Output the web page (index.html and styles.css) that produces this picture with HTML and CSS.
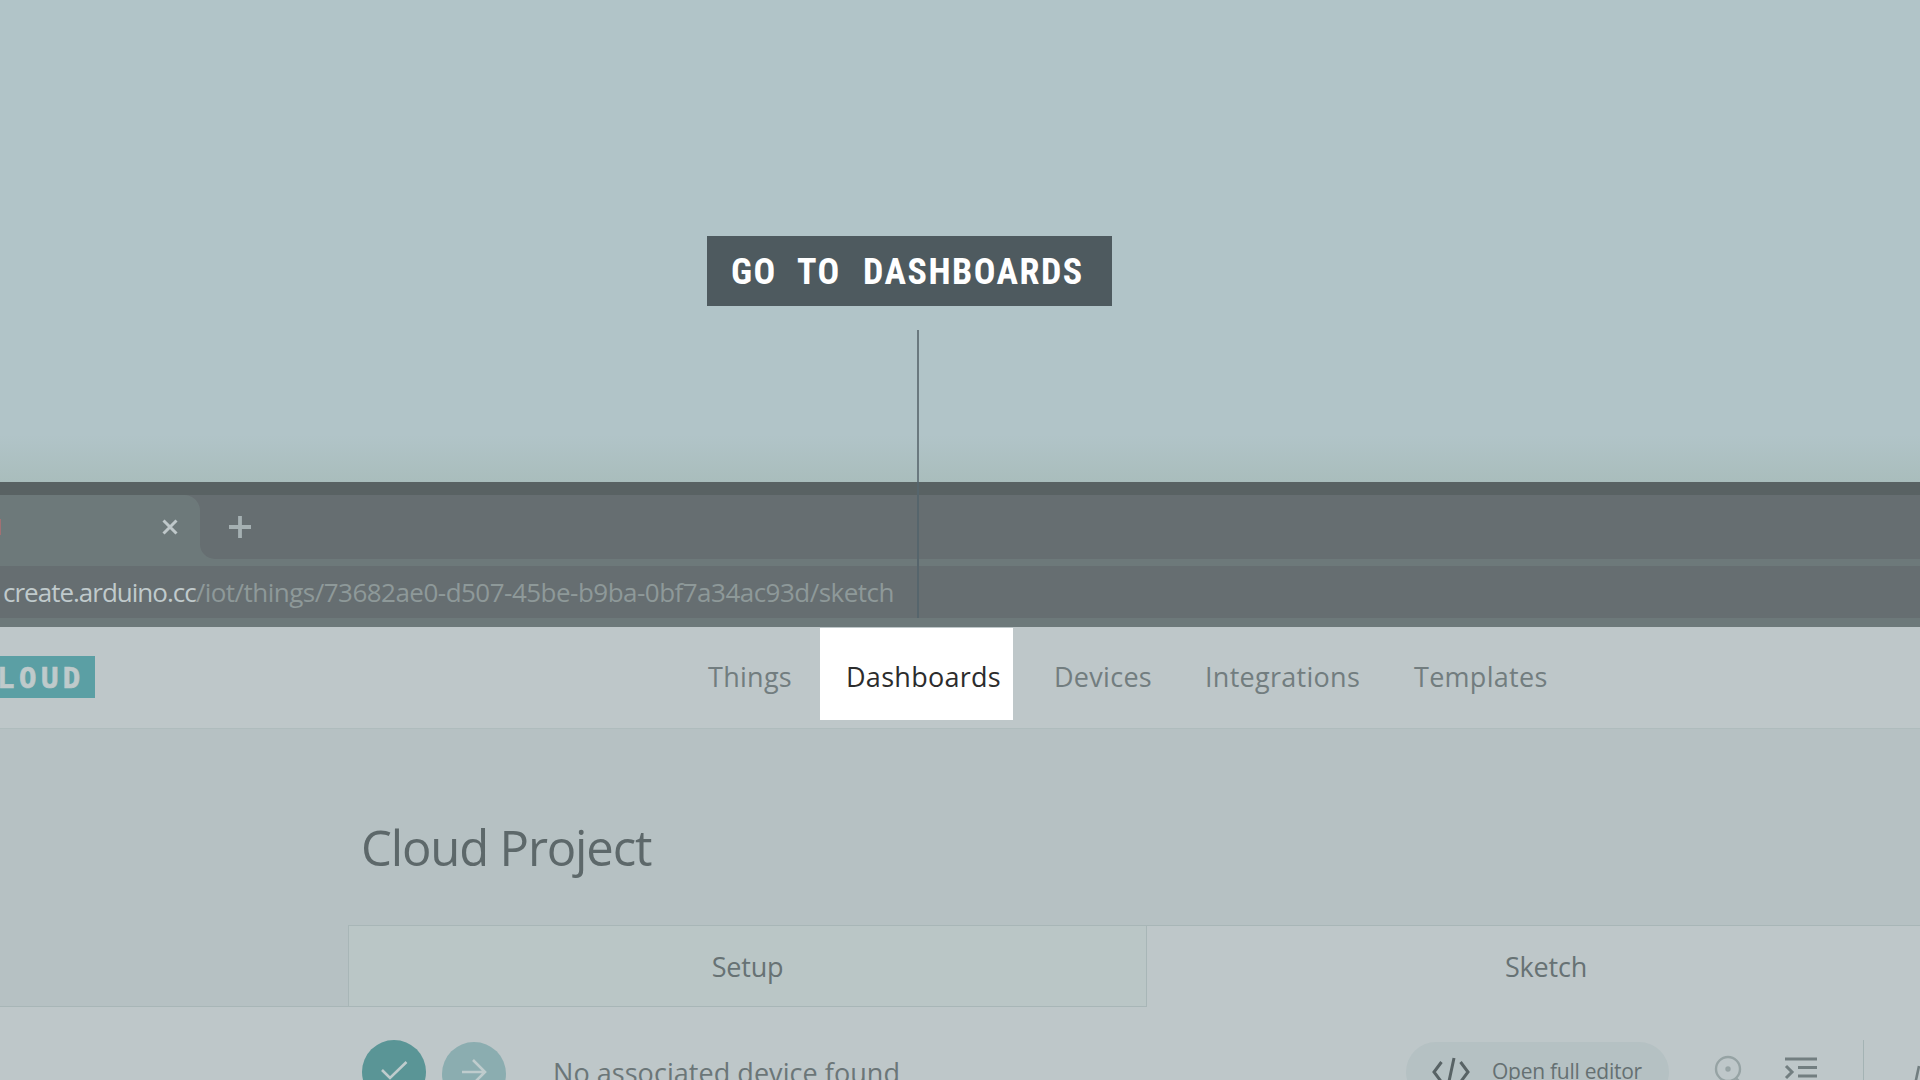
FILE: index.html
```html
<!DOCTYPE html>
<html lang="en">
<head>
<meta charset="utf-8">
<title>Arduino IoT Cloud</title>
<link rel="stylesheet" href="styles.css">
</head>
<body>
<main class="stage">
  <div class="backdrop"></div>
  <section class="browser">
    <div class="frame"></div>
    <div class="tabstrip">
      <div class="tab">
        <i class="favicon"></i>
        <svg class="close" width="16" height="16" viewBox="0 0 16 16"><path d="M1.5 1.5l13 13M14.500 1.500l-13 13"/></svg>
      </div>
      <div class="strip-rest">
        <svg class="plus" width="24" height="24" viewBox="0 0 24 24"><path d="M12 1v22M1 12h22"/></svg>
      </div>
    </div>
    <div class="addressbar"><span class="host">create.arduino.cc</span><span class="path">/iot/things/73682ae0-d507-45be-b9ba-0bf7a34ac93d/sketch</span></div>
    <header class="navbar">
      <div class="logo">CLOUD</div>
      <nav class="menu">
        <a class="things">Things</a>
        <a class="dashboards">Dashboards</a>
        <a class="devices">Devices</a>
        <a class="integrations">Integrations</a>
        <a class="templates">Templates</a>
      </nav>
    </header>
    <div class="heading"><h1>Cloud Project</h1></div>
    <div class="tabs">
      <div class="tab-gutter"></div>
      <div class="tab-setup"><span>Setup</span></div>
      <div class="tab-sketch"><span>Sketch</span></div>
    </div>
    <div class="toolbar">
      <div class="round verify"><svg width="64" height="64" viewBox="0 0 64 64"><path d="M20 30l8 8L44.500 22"/></svg></div>
      <div class="round upload"><svg width="64" height="64" viewBox="0 0 64 64"><path d="M20 30h22M31 18l12 12-12 12"/></svg></div>
      <span class="device">No associated device found</span>
      <div class="editor"><svg width="38" height="32" viewBox="0 0 38 32"><path d="M9.500 6L2 16l7.500 10M22 2l-6 28M28.500 6L36 16l-7.500 10"/></svg><span>Open full editor</span></div>
      <svg class="search" width="36" height="40" viewBox="0 0 36 40"><circle cx="14" cy="14" r="12"/><circle class="dot" cx="14" cy="14" r="1.500"/><path d="M22 23l8 9"/></svg>
      <svg class="indent" width="34" height="32" viewBox="0 0 34 32"><path d="M1 3h32M14 11.500h19M14 20h19M1 28h32M2 10l6 6-6 6"/></svg>
      <i class="divider"></i>
      <svg class="console" width="40" height="40" viewBox="0 0 40 40"><path d="M9 1L1 38"/></svg>
    </div>
  </section>
  <div class="callout"><span class="w-go">GO</span><span class="w-to">TO</span><span class="w-dash">DASHBOARDS</span></div>
  <i class="pointer"></i>
</main>
</body>
</html>
```
FILE: styles.css
```css
* { box-sizing: border-box; }
body { margin: 0; background: #b1c4c8; }
.stage {
  position: relative;
  width: 1920px;
  height: 1080px;
  overflow: hidden;
  font-family: "Open Sans", "Noto Sans", sans-serif;
  white-space: nowrap;
}
svg { display: block; flex: none; fill: none; stroke: currentColor; stroke-width: 2.6; }
.backdrop { height: 482px; background: linear-gradient(#b1c4c8 0, #b1c4c8 435px, #a9bdbc 482px); }
.frame { height: 13px; background: #596263; }
.tabstrip { display: flex; height: 64px; background: #6d797a; }
.tab {
  display: flex;
  align-items: center;
  justify-content: space-between;
  width: 200px;
  height: 64px;
  padding-right: 22px;
  background: radial-gradient(circle at 0 16px, #6d797a 15.5px, #666e71 16.5px) right top / 16px 16px no-repeat #6d797a;
  color: #bfc8ca;
}
.close { stroke-width: 3; }
.favicon { width: 1px; height: 16px; background: #a27073; }
.strip-rest {
  display: flex;
  align-items: center;
  flex: 1;
  padding-left: 28px;
  border-bottom-left-radius: 15px;
  background: #666e71;
  color: #a5b0b2;
}
.plus { stroke-width: 3.8; }
.addressbar {
  display: flex;
  align-items: center;
  height: 68px;
  padding: 0 0 0 3px;
  border-top: 7px solid #6d797a;
  border-bottom: 9px solid #6d797a;
  background: #666e71;
  font-size: 26px;
  color: #8e9999;
  letter-spacing: -0.520px;
}
.host { color: #c0cacc; letter-spacing: -1px; }
.navbar {
  display: flex;
  height: 102px;
  background: #bec7c9;
  border-bottom: 1px solid #afbcbd;
}
.logo {
  width: 120px;
  height: 42px;
  margin: 29px 0 0 -25px;
  background: #5b9fa4;
  color: #bfcacb;
  font: bold 29px/44px "DejaVu Sans Mono", monospace;
  letter-spacing: 4.500px;
  -webkit-text-stroke: 0.7px #bfcacb;
}
.menu { display: flex; height: 94px; padding: 1px 0 0 613px; font-size: 27px; line-height: 97px; color: #727d7f; letter-spacing: 0.280px; }
.menu a { display: block; flex: none; height: 92px; }
.things { width: 112px; }
.dashboards { width: 193px; padding-left: 26px; background: #fff; color: #2c2c2c; }
.devices { padding-left: 41px; width: 192px; }
.integrations { width: 209px; }
.heading { height: 196px; padding: 83px 0 0 361px; background: #b6c1c3; }
h1 { margin: 0; font-size: 49px; line-height: 70px; font-weight: 400; color: #5d686a; letter-spacing: -1.150px; }
.tabs { display: flex; height: 82px; font-size: 27px; line-height: 82px; text-align: center; color: #677274; }
.tab-gutter { width: 348px; background: #b6c1c3; border-bottom: 1px solid #a8b6b7; }
.tab-setup { width: 799px; background: #bac6c6; border: 1px solid #a8b6b7; letter-spacing: -0.200px; }
.tab-sketch { width: 773px; padding-left: 24px; background: #bec7c9; border-top: 1px solid #a8b6b7; letter-spacing: -0.200px; }
.tab-sketch span { display: block; width: 750px; }
.toolbar { display: flex; align-items: flex-start; height: 73px; padding-left: 362px; overflow: hidden; background: #bec7c9; color: #727e80; }
.round { flex: none; width: 64px; height: 64px; border-radius: 50%; color: #bfcccd; }
.verify { margin: 33px 16px 0 0; background: #5a9596; }
.upload { margin: 35px 47px 0 0; background: #8badb0; }
.device { flex: none; width: 853px; margin-top: 46px; font-size: 27px; line-height: 40px; color: #6b7678; letter-spacing: 0.050px; }
.editor { display: flex; flex: none; align-items: center; width: 263px; height: 60px; margin: 35px 45px 0 0; padding: 0 0 3px 26px; gap: 22px; border-radius: 30px; background: #b5c1c3; font-size: 21px; color: #657072; letter-spacing: -0.250px; }
.editor svg { position: relative; top: 1px; color: #586365; stroke-width: 3; }
.search { margin: 48px 34px 0 0; color: #96a3a4; stroke-width: 2.4; }
.indent { margin: 49px 45px 0 0; stroke-width: 3; }
.divider { width: 1px; height: 50px; margin: 33px 46px 0 0; background: #a4b3b4; flex: none; }
.console { margin-top: 58px; }
.callout {
  position: absolute;
  left: 707px;
  top: 236px;
  display: flex;
  width: 405px;
  height: 70px;
  padding-left: 24px;
  background: #4e5a5f;
  color: #fff;
  font: bold 36px/72px Roboto, sans-serif;
  font-stretch: 85%;
  letter-spacing: 1.500px;
}
.callout span { display: block; }
.w-go, .w-to { width: 66px; }
.pointer { position: absolute; left: 917px; top: 330px; width: 2px; height: 288px; background: linear-gradient(#6a797f 152px, #56656c 152px); }
```
